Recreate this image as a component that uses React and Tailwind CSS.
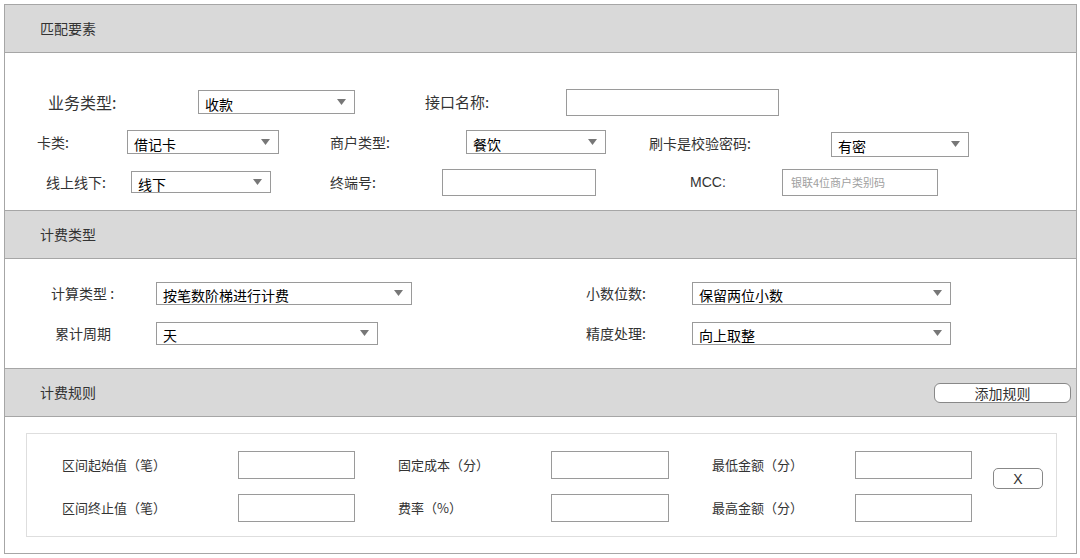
import React from 'react';

const font = { fontFamily: '"Noto Sans CJK SC", "Noto Sans", sans-serif' };

function Select({ className, text }) {
  return (
    <div className={`flex items-center justify-between border border-[#9a9a9a] bg-white pl-[6px] pr-[8px] ${className}`}>
      <span className="text-[14px] leading-none text-black pt-[3px]">{text}</span>
      <svg width="9" height="6" viewBox="0 0 9 6">
        <path d="M0 0 L9 0 L4.5 6 Z" fill="#777" />
      </svg>
    </div>
  );
}

function Input({ className, placeholder }) {
  return (
    <div className={`flex items-center border border-[#9a9a9a] bg-white pl-[8px] ${className}`}>
      {placeholder && <span className="text-[11px] text-[#a0a0a0] leading-none">{placeholder}</span>}
    </div>
  );
}

function Header({ title, children }) {
  return (
    <div className="h-[48px] shrink-0 bg-[#d9d9d9] border-b border-[#a6a6a6] flex items-center justify-between pl-[35px] pr-[5px]">
      <span className="text-[14px] text-[#333]">{title}</span>
      {children}
    </div>
  );
}

export default function App() {
  return (
    <div className="w-[1080px] h-[558px] bg-white pl-[4px] pt-[4px]" style={font}>
      <div className="w-[1073px] h-[550px] border border-[#a6a6a6] flex flex-col text-[#333]">
        {/* 匹配要素 */}
        <Header title="匹配要素" />
        <div className="h-[158px] shrink-0 border-b border-[#a6a6a6] pt-[35px] flex flex-col gap-[12px]">
          <div className="h-[28px] flex items-center pl-[43px]">
            <span className="w-[150px] text-[16px]">业务类型:</span>
            <Select className="w-[157px] h-[24px]" text="收款" />
            <span className="ml-[70px] w-[141px] text-[15px]">接口名称:</span>
            <Input className="w-[213px] h-[27px]" />
          </div>
          <div className="h-[28px] flex items-center pl-[32px]">
            <span className="w-[90px] text-[14px]">卡类:</span>
            <Select className="w-[152px] h-[24px]" text="借记卡" />
            <span className="ml-[51px] w-[136px] text-[14px]">商户类型:</span>
            <Select className="w-[140px] h-[24px]" text="餐饮" />
            <span className="ml-[43px] w-[182px] text-[14px] pt-[3px]">刷卡是校验密码:</span>
            <Select className="w-[138px] h-[25px] mt-[4px]" text="有密" />
          </div>
          <div className="h-[28px] flex items-center pl-[41px]">
            <span className="w-[85px] text-[14px]">线上线下:</span>
            <Select className="w-[140px] h-[22px]" text="线下" />
            <span className="ml-[59px] w-[112px] text-[14px]">终端号:</span>
            <Input className="w-[154px] h-[27px]" />
            <span className="ml-[94px] w-[92px] text-[14px]" style={{ fontFamily: '"Liberation Sans", sans-serif' }}>MCC:</span>
            <Input className="w-[156px] h-[27px]" placeholder="银联4位商户类别码" />
          </div>
        </div>

        {/* 计费类型 */}
        <Header title="计费类型" />
        <div className="h-[110px] shrink-0 border-b border-[#a6a6a6] pt-[22px] flex flex-col gap-[16px]">
          <div className="h-[24px] flex items-center pl-[46px]">
            <span className="w-[105px] text-[14px]">计算类型 :</span>
            <Select className="w-[256px] h-[23px]" text="按笔数阶梯进行计费" />
            <span className="ml-[174px] w-[106px] text-[14px]">小数位数:</span>
            <Select className="w-[259px] h-[23px]" text="保留两位小数" />
          </div>
          <div className="h-[24px] flex items-center pl-[50px]">
            <span className="w-[101px] text-[14px]">累计周期</span>
            <Select className="w-[222px] h-[23px]" text="天" />
            <span className="ml-[208px] w-[106px] text-[14px]">精度处理:</span>
            <Select className="w-[259px] h-[23px]" text="向上取整" />
          </div>
        </div>

        {/* 计费规则 */}
        <Header title="计费规则">
          <button className="w-[137px] h-[20px] rounded-[6px] border border-[#888] bg-white text-[14px] leading-none text-[#333]">
            添加规则
          </button>
        </Header>
        <div className="flex-1 pt-[16px] pl-[21px]">
          <div className="w-[1031px] h-[104px] border border-[#dedede] flex pt-[17px] pl-[35px]">
            <div className="flex flex-col gap-[15px]">
              <div className="h-[28px] flex items-center">
                <span className="w-[176px] text-[13px]">区间起始值（笔）</span>
                <Input className="w-[117px] h-[28px]" />
                <span className="ml-[43px] w-[153px] text-[13px]">固定成本（分）</span>
                <Input className="w-[118px] h-[28px]" />
                <span className="ml-[43px] w-[143px] text-[13px]">最低金额（分）</span>
                <Input className="w-[117px] h-[28px]" />
              </div>
              <div className="h-[28px] flex items-center">
                <span className="w-[176px] text-[13px]">区间终止值（笔）</span>
                <Input className="w-[117px] h-[28px]" />
                <span className="ml-[43px] w-[153px] text-[13px]">费率（%）</span>
                <Input className="w-[118px] h-[28px]" />
                <span className="ml-[43px] w-[143px] text-[13px]">最高金额（分）</span>
                <Input className="w-[117px] h-[28px]" />
              </div>
            </div>
            <button
              className="ml-[21px] mt-[17px] w-[50px] h-[21px] rounded-[5px] border border-[#888] bg-white text-[14px] leading-none text-[#333]"
              style={{ fontFamily: '"Liberation Sans", sans-serif' }}
            >
              X
            </button>
          </div>
        </div>
      </div>
    </div>
  );
}
